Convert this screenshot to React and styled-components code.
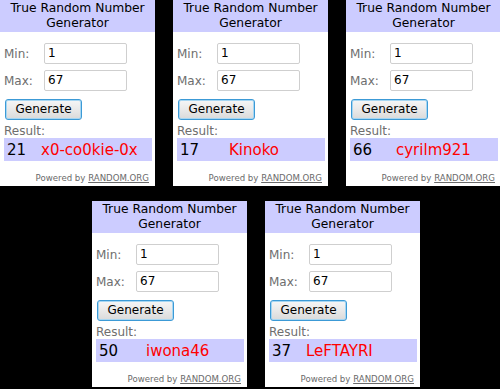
import React from "react";
import styled, { createGlobalStyle } from "styled-components";

const Global = createGlobalStyle`
  html, body { margin: 0; padding: 0; background: #000; }
  body { width: 500px; height: 389px; overflow: hidden; font-family: "DejaVu Sans", Verdana, sans-serif; }
`;

const Page = styled.div`
  display: flex;
  flex-direction: column;
  gap: 15px;
  width: 500px;
  height: 389px;
  background: #000;
`;

const Row = styled.div`
  display: flex;
  gap: 18px;
  padding-left: ${(p) => p.$indent || 0}px;
`;

const Panel = styled.div`
  width: 155px;
  height: 186px;
  background: #fff;
  display: flex;
  flex-direction: column;
  box-sizing: border-box;
`;

const Header = styled.div`
  height: 32px;
  background: #ccccff;
  color: #000;
  font-size: 12.3px;
  line-height: 15px;
  text-align: center;
  padding-top: 1px;
  box-sizing: border-box;
`;

const Body = styled.div`
  padding: 11px 3px 0 4px;
  display: flex;
  flex-direction: column;
`;

const Field = styled.div`
  display: flex;
  align-items: center;
  height: 21px;
  margin-bottom: ${(p) => p.$mb}px;
`;

const Label = styled.span`
  width: 40px;
  color: #6e6e6e;
  font-size: 12px;
`;

const Input = styled.div`
  width: 83px;
  height: 21px;
  box-sizing: border-box;
  border: 1px solid #cfcfcf;
  border-radius: 2px;
  background: #fff;
  color: #000;
  font-size: 12px;
  line-height: 19px;
  padding-left: 3px;
`;

const Button = styled.button`
  width: 77px;
  height: 21px;
  margin-left: 1px;
  box-sizing: border-box;
  border: 1px solid #3c9ad6;
  border-radius: 3px;
  background: linear-gradient(#f6f6f6, #e9e9e9 50%, #dadada);
  box-shadow: inset 0 0 0 1px #a6d6f2;
  font-family: "DejaVu Sans", Verdana, sans-serif;
  font-size: 12px;
  color: #000;
  padding: 0;
  line-height: 19px;
`;

const ResultLabel = styled.div`
  margin-top: 4px;
  color: #6e6e6e;
  font-size: 12px;
  line-height: 14px;
`;

const ResultBar = styled.div`
  width: 148px;
  height: 23px;
  background: #ccccff;
  display: flex;
  align-items: center;
  padding-left: 3px;
  box-sizing: border-box;
`;

const Num = styled.span`
  width: 30px;
  color: #000;
  font-size: 15px;
`;

const Name = styled.span`
  margin-left: ${(p) => p.$offset}px;
  color: #ff0000;
  font-family: "Comic Sans MS", "DejaVu Sans", sans-serif;
  font-size: 15px;
  white-space: nowrap;
`;

const Powered = styled.div`
  margin-top: 11px;
  padding-right: 3px;
  text-align: right;
  color: #6a6a6a;
  font-size: 8.6px;
  line-height: 12px;
`;

const Link = styled.span`
  text-decoration: underline;
`;

function Generator({ num, name, nameAt }) {
  return (
    <Panel>
      <Header>
        True Random Number
        <br />
        Generator
      </Header>
      <Body>
        <Field $mb={6}>
          <Label>Min:</Label>
          <Input>1</Input>
        </Field>
        <Field $mb={7}>
          <Label>Max:</Label>
          <Input>67</Input>
        </Field>
        <div>
          <Button>Generate</Button>
        </div>
        <ResultLabel>Result:</ResultLabel>
        <ResultBar>
          <Num>{num}</Num>
          <Name $offset={nameAt - 37}>{name}</Name>
        </ResultBar>
        <Powered>
          Powered by <Link>RANDOM.ORG</Link>
        </Powered>
      </Body>
    </Panel>
  );
}

export default function App() {
  return (
    <>
      <Global />
      <Page>
        <Row>
          <Generator num="21" name="x0-co0kie-0x" nameAt={41} />
          <Generator num="17" name="Kinoko" nameAt={56} />
          <Generator num="66" name="cyrilm921" nameAt={50} />
        </Row>
        <Row $indent={92}>
          <Generator num="50" name="iwona46" nameAt={54} />
          <Generator num="37" name="LeFTAYRI" nameAt={41} />
        </Row>
      </Page>
    </>
  );
}
